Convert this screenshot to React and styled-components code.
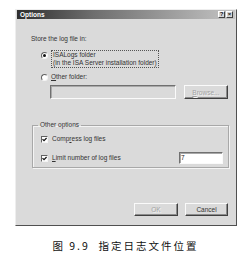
import React from "react";
import styled, { createGlobalStyle } from "styled-components";

const Global = createGlobalStyle`
  html, body {
    margin: 0;
    padding: 0;
    background: #fff;
  }
  body {
    font-family: "Liberation Sans", Arial, sans-serif;
    font-size: 6.5px;
    color: #333;
  }
`;

const Page = styled.div`
  width: 249px;
  height: 265px;
  display: flex;
  flex-direction: column;
  align-items: flex-start;
`;

const Dialog = styled.div`
  margin: 9px 0 0 15px;
  width: 222px;
  height: 217px;
  box-sizing: border-box;
  background: #dadada;
  border: 1px solid;
  border-color: #eeeeee #505050 #505050 #eeeeee;
  display: flex;
  flex-direction: column;
`;

const TitleBar = styled.div`
  height: 9px;
  margin: 0 1px;
  background: linear-gradient(to right, #2e2e2e 0%, #6e6e6e 35%, #c4c4c4 100%);
  display: flex;
  align-items: center;
  justify-content: space-between;
  padding: 0 2px 0 3px;
`;

const Title = styled.span`
  color: #fff;
  font-weight: bold;
  font-size: 6.5px;
  line-height: 9px;
`;

const TitleButtons = styled.div`
  display: flex;
  gap: 1px;
`;

const TitleButton = styled.div`
  width: 7px;
  height: 7px;
  box-sizing: border-box;
  background: #d6d6d6;
  border: 1px solid;
  border-color: #fff #404040 #404040 #fff;
  font-size: 6px;
  line-height: 5px;
  font-weight: bold;
  text-align: center;
  color: #111;
`;

const Body = styled.div`
  flex: 1;
  display: flex;
  flex-direction: column;
  padding: 16px 8px 9px 15px;
`;

const Text = styled.div`
  line-height: 8px;
  white-space: nowrap;
`;

const RadioRow = styled.div`
  display: flex;
  align-items: flex-start;
  gap: 3px;
  margin: ${(p) => p.$mt || 0}px 0 0 10px;
`;

const Radio = styled.span`
  width: 7px;
  height: 7px;
  margin-top: ${(p) => p.$top || 1}px;
  box-sizing: border-box;
  border-radius: 50%;
  background: #fff;
  border: 1px solid;
  border-color: #606060 #f4f4f4 #f4f4f4 #606060;
  display: flex;
  align-items: center;
  justify-content: center;
  &::after {
    content: "";
    width: 3px;
    height: 3px;
    border-radius: 50%;
    background: ${(p) => (p.$checked ? "#111" : "transparent")};
  }
`;

const FocusLabel = styled.div`
  border: 1px dotted #555;
  padding: 0 1px;
`;

const Underlined = styled.span`
  text-decoration: underline;
`;

const FieldRow = styled.div`
  display: flex;
  align-items: center;
  margin: 4px 0 0 19px;
  gap: 8px;
`;

const TextField = styled.div`
  width: 128px;
  height: 14px;
  box-sizing: border-box;
  background: ${(p) => (p.$disabled ? "#dadada" : "#fff")};
  border: 1px solid;
  border-color: #707070 #fafafa #fafafa #707070;
  box-shadow: inset 1px 1px #a8a8a8;
  padding: 1px 2px;
  line-height: 9px;
  color: #222;
`;

const Button = styled.div`
  width: ${(p) => p.$w}px;
  height: ${(p) => p.$h || 13}px;
  box-sizing: border-box;
  background: #dadada;
  border: 1px solid;
  border-color: #fafafa #404040 #404040 #fafafa;
  box-shadow: inset -1px -1px #8c8c8c;
  display: flex;
  align-items: center;
  justify-content: center;
  color: ${(p) => (p.$disabled ? "#a2a2a2" : "#333")};
  text-shadow: ${(p) => (p.$disabled ? "1px 1px #f2f2f2" : "none")};
`;

const Group = styled.fieldset`
  margin: 22px 0 0 1px;
  width: 197px;
  height: 47px;
  box-sizing: border-box;
  padding: 0 0 0 8px;
  border: 1px solid #a8a8a8;
  box-shadow: 1px 1px #f4f4f4, inset 1px 1px #f4f4f4;
  display: flex;
  flex-direction: column;
`;

const Legend = styled.legend`
  padding: 0 2px;
  margin-left: -3px;
  line-height: 8px;
`;

const CheckRow = styled.div`
  display: flex;
  align-items: center;
  gap: 4px;
  margin-top: ${(p) => p.$mt}px;
  height: 12px;
`;

const CheckBox = styled.span`
  width: 7px;
  height: 7px;
  box-sizing: border-box;
  background: #fff;
  border: 1px solid;
  border-color: #606060 #f4f4f4 #f4f4f4 #606060;
  display: flex;
  align-items: center;
  justify-content: center;
`;

const Spacer = styled.div`
  flex: 1;
`;

const SmallInput = styled(TextField)`
  width: 44px;
  height: 12px;
  margin-right: 5px;
  line-height: 8px;
  padding: 1px 1px;
`;

const Footer = styled.div`
  margin-top: auto;
  display: flex;
  justify-content: flex-end;
  gap: 7px;
`;

const Caption = styled.div`
  width: 249px;
  margin-top: 14px;
  padding-left: 2px;
  box-sizing: border-box;
  text-align: center;
  font-family: "Noto Sans CJK SC", "Noto Sans", sans-serif;
  font-size: 10.5px;
  letter-spacing: 2px;
  color: #111;
  line-height: 12px;
  white-space: pre;
`;

const Check = () => (
  <svg width="5" height="5" viewBox="0 0 5 5">
    <path d="M0.5 2.2 L2 3.7 L4.6 1" stroke="#111" strokeWidth="1.2" fill="none" />
  </svg>
);

export default function App() {
  return (
    <Page>
      <Global />
      <Dialog>
        <TitleBar>
          <Title>Options</Title>
          <TitleButtons>
            <TitleButton>?</TitleButton>
            <TitleButton>×</TitleButton>
          </TitleButtons>
        </TitleBar>
        <Body>
          <Text>Store the log file in:</Text>
          <RadioRow $mt={7}>
            <Radio $checked $top={2} />
            <FocusLabel>
              <Text>ISALogs folder</Text>
              <Text>(in the ISA Server installation folder)</Text>
            </FocusLabel>
          </RadioRow>
          <RadioRow $mt={5}>
            <Radio />
            <Text>
              <Underlined>O</Underlined>ther folder:
            </Text>
          </RadioRow>
          <FieldRow>
            <TextField $disabled />
            <Button $w={45} $h={14} $disabled>
              <Underlined>B</Underlined>rowse...
            </Button>
          </FieldRow>
          <Group>
            <Legend>Other options</Legend>
            <CheckRow $mt={4}>
              <CheckBox>
                <Check />
              </CheckBox>
              <Text>
                Comp<Underlined>r</Underlined>ess log files
              </Text>
            </CheckRow>
            <CheckRow $mt={7}>
              <CheckBox>
                <Check />
              </CheckBox>
              <Text>
                <Underlined>L</Underlined>imit number of log files
              </Text>
              <Spacer />
              <SmallInput>7</SmallInput>
            </CheckRow>
          </Group>
          <Footer>
            <Button $w={44} $disabled>OK</Button>
            <Button $w={43}>Cancel</Button>
          </Footer>
        </Body>
      </Dialog>
      <Caption>{"图 9.9  指定日志文件位置"}</Caption>
    </Page>
  );
}
